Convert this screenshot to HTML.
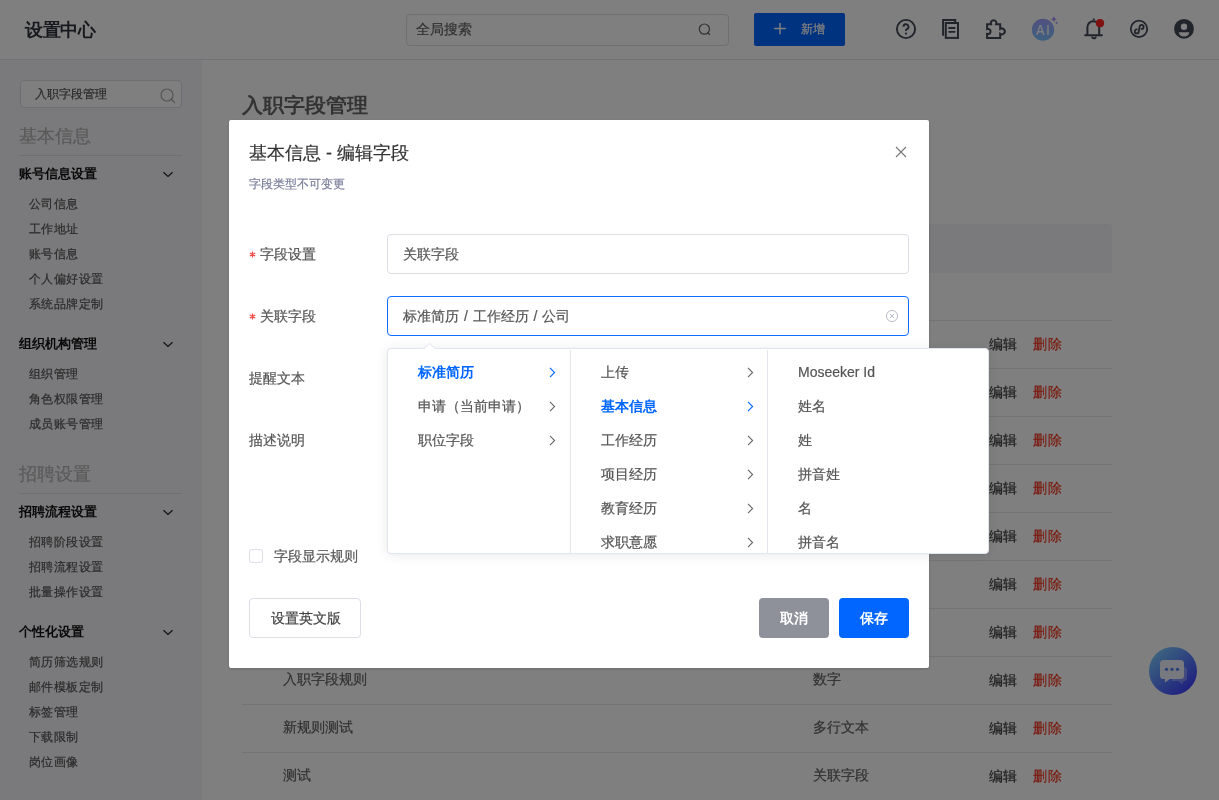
<!DOCTYPE html>
<html><head><meta charset="utf-8"><style>
*{margin:0;padding:0;box-sizing:border-box}
html,body{width:1219px;height:800px;overflow:hidden;background:#fff;font-family:"Liberation Sans",sans-serif;color:#333}
.a{position:absolute}
.t{position:absolute;white-space:nowrap;line-height:1;-webkit-text-stroke-width:.2px}
.t.b{-webkit-text-stroke-width:0}
#root{position:absolute;left:0;top:0;width:1219px;height:800px;overflow:hidden;will-change:transform}
svg{position:absolute;overflow:visible}
</style></head><body><div id="root">
<div class="a" style="left:0px;top:0px;width:1219px;height:59px;background:#fff"></div>
<div class="a" style="left:0px;top:59px;width:1219px;height:1px;background:#e2e4ea"></div>
<div class="t b" style="left:25px;top:21.3px;font-size:18px;color:#30333c;font-weight:bold;transform:scale(0.975);transform-origin:0 0">设置中心</div>
<div class="a" style="left:406px;top:14px;width:323px;height:32px;border:1px solid #dcdde6;border-radius:4px"></div>
<div class="t" style="left:416px;top:22px;font-size:14px;color:#666;font-weight:normal;">全局搜索</div>
<svg style="left:696px;top:21px" width="16" height="16" viewBox="0 0 16 16"><circle cx="8.4" cy="8.1" r="5.1" fill="none" stroke="#666" stroke-width="1.2"/><line x1="12" y1="11.8" x2="13.7" y2="13.6" stroke="#666" stroke-width="1.3" stroke-linecap="round"/></svg>
<div class="a" style="left:754px;top:13px;width:91px;height:33px;background:#0066ff;border-radius:2px"></div>
<svg style="left:772px;top:21px" width="16" height="16" viewBox="0 0 16 16"><path d="M8 2V13.2M2.2 7.6H13.8" stroke="#fff" stroke-width="1.5"/></svg>
<div class="t" style="left:801px;top:22.5px;font-size:12px;color:#fff;font-weight:normal;">新增</div>
<svg style="left:894px;top:17px" width="24" height="24" viewBox="0 0 24 24"><circle cx="12" cy="12" r="9.1" fill="none" stroke="#434856" stroke-width="1.9"/><path d="M9.5 9.8a2.5 2.5 0 1 1 3.4 2.3c-.6.3-.9.7-.9 1.3v.5" fill="none" stroke="#434856" stroke-width="1.9"/><circle cx="12" cy="16.6" r="1.1" fill="#434856"/></svg>
<svg style="left:940px;top:17px" width="22" height="24" viewBox="0 0 22 24"><path d="M3.1 18.8V3H15.2V6" fill="none" stroke="#434856" stroke-width="2"/><rect x="5.8" y="6" width="12.2" height="14.9" fill="none" stroke="#434856" stroke-width="2"/><path d="M9.1 11H14.7M9.1 14.8H14.7" stroke="#434856" stroke-width="1.8" stroke-linecap="round"/></svg>
<svg style="left:984px;top:17px" width="24" height="24" viewBox="0 0 24 24"><path d="M3.1 20.9V16.9A2.6 2.6 0 1 0 3.1 12V7.2H7A2.85 2.85 0 1 1 12.2 7.2H16.2V12A2.95 2.95 0 1 1 16.2 16.9V20.9Z" fill="none" stroke="#434856" stroke-width="2" stroke-linejoin="miter"/></svg>
<svg style="left:1030px;top:16px" width="30" height="28" viewBox="0 0 30 28"><defs><linearGradient id="aig" x1="0" y1="0" x2="0" y2="1"><stop offset="0" stop-color="#a2a2ff"/><stop offset="1" stop-color="#7cc0ff"/></linearGradient></defs><circle cx="13" cy="13.75" r="11.1" fill="url(#aig)"/><text transform="translate(6.2 19.2) scale(0.92 1.12)" x="0" y="0" font-family="Liberation Sans" font-size="13.4" letter-spacing="2" fill="#fff" stroke="#fff" stroke-width=".2">AI</text><path d="M23.9 0.2l.9 2.1 2.1.9-2.1.9-.9 2.1-.9-2.1-2.1-.9 2.1-.9z" fill="#a58dff"/><path d="M26.6 5.4l.5 1.1 1.1.5-1.1.5-.5 1.1-.5-1.1-1.1-.5 1.1-.5z" fill="#8fa0ff"/></svg>
<svg style="left:1082px;top:16px" width="26" height="26" viewBox="0 0 26 26"><path d="M5.4 19.6V11.2a5.9 5.9 0 0 1 11.8 0v8.4" fill="none" stroke="#434856" stroke-width="2"/><path d="M3.2 19.3h16.7" stroke="#434856" stroke-width="2.1" stroke-linecap="round"/><path d="M10 20.4a1.9 1.9 0 0 0 3.8 0" fill="none" stroke="#434856" stroke-width="1.8"/><path d="M11.8 2.5v2" stroke="#434856" stroke-width="1.8"/><circle cx="18" cy="7.2" r="4.1" fill="#ff2222"/></svg>
<svg style="left:1127px;top:17px" width="24" height="24" viewBox="0 0 24 24"><circle cx="12" cy="11.9" r="8.2" fill="none" stroke="#434856" stroke-width="1.8"/><path d="M9.8 12.4A2 2 0 1 0 11.8 14.4L12.6 9.9A2 2 0 1 1 14.6 11.9" fill="none" stroke="#434856" stroke-width="1.8" stroke-linecap="round"/></svg>
<svg style="left:1172px;top:17px" width="24" height="24" viewBox="0 0 24 24"><circle cx="12" cy="11.8" r="9.9" fill="#434856"/><circle cx="12" cy="9.8" r="3.2" fill="#fff"/><path d="M6.8 15.2H17.3A5.25 4.3 0 0 1 6.8 15.2Z" fill="#fff"/></svg>
<div class="a" style="left:0px;top:60px;width:202px;height:740px;background:#f4f4f8"></div>
<div class="a" style="left:20px;top:80px;width:162px;height:28px;border:1px solid #d9dce3;border-radius:4px;background:#fff"></div>
<div class="t" style="left:35px;top:88px;font-size:12px;color:#555;font-weight:normal;">入职字段管理</div>
<svg style="left:160px;top:88px" width="17" height="17" viewBox="0 0 17 17"><circle cx="7" cy="7" r="6" fill="none" stroke="#aaa" stroke-width="1.2"/><line x1="11.3" y1="11.3" x2="14.5" y2="14.5" stroke="#aaa" stroke-width="1.3" stroke-linecap="round"/></svg>
<div class="t" style="left:19px;top:127px;font-size:18px;color:#b3b3b3;font-weight:normal;">基本信息</div>
<div class="a" style="left:19px;top:155px;width:163px;height:1px;background:#e0e0e6"></div>
<div class="t b" style="left:19px;top:166.5px;font-size:13px;color:#111;font-weight:bold;">账号信息设置</div>
<svg style="left:162px;top:170px" width="12" height="8" viewBox="0 0 12 8"><path d="M1.4 2.3L6 6.5L10.6 2.3" fill="none" stroke="#222" stroke-width="1.2"/></svg>
<div class="t" style="left:29px;top:198.3px;font-size:12px;color:#555;font-weight:normal;transform:scale(1.035);transform-origin:0 0">公司信息</div>
<div class="t" style="left:29px;top:223.3px;font-size:12px;color:#555;font-weight:normal;transform:scale(1.035);transform-origin:0 0">工作地址</div>
<div class="t" style="left:29px;top:248.3px;font-size:12px;color:#555;font-weight:normal;transform:scale(1.035);transform-origin:0 0">账号信息</div>
<div class="t" style="left:29px;top:273.3px;font-size:12px;color:#555;font-weight:normal;transform:scale(1.035);transform-origin:0 0">个人偏好设置</div>
<div class="t" style="left:29px;top:298.3px;font-size:12px;color:#555;font-weight:normal;transform:scale(1.035);transform-origin:0 0">系统品牌定制</div>
<div class="t b" style="left:19px;top:336.5px;font-size:13px;color:#111;font-weight:bold;">组织机构管理</div>
<svg style="left:162px;top:340px" width="12" height="8" viewBox="0 0 12 8"><path d="M1.4 2.3L6 6.5L10.6 2.3" fill="none" stroke="#222" stroke-width="1.2"/></svg>
<div class="t" style="left:29px;top:368.3px;font-size:12px;color:#555;font-weight:normal;transform:scale(1.035);transform-origin:0 0">组织管理</div>
<div class="t" style="left:29px;top:393.3px;font-size:12px;color:#555;font-weight:normal;transform:scale(1.035);transform-origin:0 0">角色权限管理</div>
<div class="t" style="left:29px;top:418.3px;font-size:12px;color:#555;font-weight:normal;transform:scale(1.035);transform-origin:0 0">成员账号管理</div>
<div class="t" style="left:19px;top:465px;font-size:18px;color:#b3b3b3;font-weight:normal;">招聘设置</div>
<div class="a" style="left:19px;top:493px;width:163px;height:1px;background:#e0e0e6"></div>
<div class="t b" style="left:19px;top:504.5px;font-size:13px;color:#111;font-weight:bold;">招聘流程设置</div>
<svg style="left:162px;top:508px" width="12" height="8" viewBox="0 0 12 8"><path d="M1.4 2.3L6 6.5L10.6 2.3" fill="none" stroke="#222" stroke-width="1.2"/></svg>
<div class="t" style="left:29px;top:536.3px;font-size:12px;color:#555;font-weight:normal;transform:scale(1.035);transform-origin:0 0">招聘阶段设置</div>
<div class="t" style="left:29px;top:561.3px;font-size:12px;color:#555;font-weight:normal;transform:scale(1.035);transform-origin:0 0">招聘流程设置</div>
<div class="t" style="left:29px;top:586.3px;font-size:12px;color:#555;font-weight:normal;transform:scale(1.035);transform-origin:0 0">批量操作设置</div>
<div class="t b" style="left:19px;top:624.5px;font-size:13px;color:#111;font-weight:bold;">个性化设置</div>
<svg style="left:162px;top:628px" width="12" height="8" viewBox="0 0 12 8"><path d="M1.4 2.3L6 6.5L10.6 2.3" fill="none" stroke="#222" stroke-width="1.2"/></svg>
<div class="t" style="left:29px;top:656.3px;font-size:12px;color:#555;font-weight:normal;transform:scale(1.035);transform-origin:0 0">简历筛选规则</div>
<div class="t" style="left:29px;top:681.3px;font-size:12px;color:#555;font-weight:normal;transform:scale(1.035);transform-origin:0 0">邮件模板定制</div>
<div class="t" style="left:29px;top:706.3px;font-size:12px;color:#555;font-weight:normal;transform:scale(1.035);transform-origin:0 0">标签管理</div>
<div class="t" style="left:29px;top:731.3px;font-size:12px;color:#555;font-weight:normal;transform:scale(1.035);transform-origin:0 0">下载限制</div>
<div class="t" style="left:29px;top:756.3px;font-size:12px;color:#555;font-weight:normal;transform:scale(1.035);transform-origin:0 0">岗位画像</div>
<div class="t b" style="left:242px;top:95px;font-size:20px;color:#666;font-weight:bold;transform:scale(1.05,1.0);transform-origin:0 0">入职字段管理</div>
<div class="a" style="left:242px;top:224px;width:870px;height:49px;background:#f4f4fa;border-radius:4px 4px 0 0"></div>
<div class="a" style="left:242px;top:320px;width:870px;height:1px;background:#e8e8f0"></div>
<div class="a" style="left:242px;top:368px;width:870px;height:1px;background:#e8e8f0"></div>
<div class="a" style="left:242px;top:416px;width:870px;height:1px;background:#e8e8f0"></div>
<div class="a" style="left:242px;top:464px;width:870px;height:1px;background:#e8e8f0"></div>
<div class="a" style="left:242px;top:512px;width:870px;height:1px;background:#e8e8f0"></div>
<div class="a" style="left:242px;top:560px;width:870px;height:1px;background:#e8e8f0"></div>
<div class="a" style="left:242px;top:608px;width:870px;height:1px;background:#e8e8f0"></div>
<div class="a" style="left:242px;top:656px;width:870px;height:1px;background:#e8e8f0"></div>
<div class="a" style="left:242px;top:704px;width:870px;height:1px;background:#e8e8f0"></div>
<div class="a" style="left:242px;top:752px;width:870px;height:1px;background:#e8e8f0"></div>
<div class="t" style="left:989px;top:337px;font-size:14px;color:#3a3a3a;font-weight:normal;">编辑</div>
<div class="t" style="left:1033px;top:337px;font-size:14px;color:#f2301c;font-weight:normal;letter-spacing:.5px">删除</div>
<div class="t" style="left:989px;top:385px;font-size:14px;color:#3a3a3a;font-weight:normal;">编辑</div>
<div class="t" style="left:1033px;top:385px;font-size:14px;color:#f2301c;font-weight:normal;letter-spacing:.5px">删除</div>
<div class="t" style="left:989px;top:433px;font-size:14px;color:#3a3a3a;font-weight:normal;">编辑</div>
<div class="t" style="left:1033px;top:433px;font-size:14px;color:#f2301c;font-weight:normal;letter-spacing:.5px">删除</div>
<div class="t" style="left:989px;top:481px;font-size:14px;color:#3a3a3a;font-weight:normal;">编辑</div>
<div class="t" style="left:1033px;top:481px;font-size:14px;color:#f2301c;font-weight:normal;letter-spacing:.5px">删除</div>
<div class="t" style="left:989px;top:529px;font-size:14px;color:#3a3a3a;font-weight:normal;">编辑</div>
<div class="t" style="left:1033px;top:529px;font-size:14px;color:#f2301c;font-weight:normal;letter-spacing:.5px">删除</div>
<div class="t" style="left:989px;top:577px;font-size:14px;color:#3a3a3a;font-weight:normal;">编辑</div>
<div class="t" style="left:1033px;top:577px;font-size:14px;color:#f2301c;font-weight:normal;letter-spacing:.5px">删除</div>
<div class="t" style="left:989px;top:625px;font-size:14px;color:#3a3a3a;font-weight:normal;">编辑</div>
<div class="t" style="left:1033px;top:625px;font-size:14px;color:#f2301c;font-weight:normal;letter-spacing:.5px">删除</div>
<div class="t" style="left:989px;top:673px;font-size:14px;color:#3a3a3a;font-weight:normal;">编辑</div>
<div class="t" style="left:1033px;top:673px;font-size:14px;color:#f2301c;font-weight:normal;letter-spacing:.5px">删除</div>
<div class="t" style="left:989px;top:721px;font-size:14px;color:#3a3a3a;font-weight:normal;">编辑</div>
<div class="t" style="left:1033px;top:721px;font-size:14px;color:#f2301c;font-weight:normal;letter-spacing:.5px">删除</div>
<div class="t" style="left:989px;top:769px;font-size:14px;color:#3a3a3a;font-weight:normal;">编辑</div>
<div class="t" style="left:1033px;top:769px;font-size:14px;color:#f2301c;font-weight:normal;letter-spacing:.5px">删除</div>
<div class="t" style="left:283px;top:672px;font-size:14px;color:#606060;font-weight:normal;">入职字段规则</div>
<div class="t" style="left:813px;top:672px;font-size:14px;color:#606060;font-weight:normal;">数字</div>
<div class="t" style="left:283px;top:720px;font-size:14px;color:#606060;font-weight:normal;">新规则测试</div>
<div class="t" style="left:813px;top:720px;font-size:14px;color:#606060;font-weight:normal;">多行文本</div>
<div class="t" style="left:283px;top:768px;font-size:14px;color:#606060;font-weight:normal;">测试</div>
<div class="t" style="left:813px;top:768px;font-size:14px;color:#606060;font-weight:normal;">关联字段</div>
<svg style="left:1149px;top:647px" width="48" height="48" viewBox="0 0 48 48"><defs><linearGradient id="cg" x1="0.1" y1="0.05" x2="0.9" y2="0.95"><stop offset="0" stop-color="#7cd0ff"/><stop offset="1" stop-color="#3a36ff"/></linearGradient></defs><circle cx="24" cy="24" r="24" fill="url(#cg)"/><path d="M23 20h12a3 3 0 0 1 3 3v8a3 3 0 0 1-3 3h-0.5l-1 3.5-4-3.5H23z" fill="#fff" opacity=".3"/><path d="M14.5 13h17a3.5 3.5 0 0 1 3.5 3.5v12a3.5 3.5 0 0 1-3.5 3.5H21l-5 3.5V32h-1.5A3.5 3.5 0 0 1 11 28.5v-12A3.5 3.5 0 0 1 14.5 13z" fill="#eef2ff"/><circle cx="17.5" cy="22.3" r="1.6" fill="#4f7fee"/><circle cx="23" cy="22.3" r="1.6" fill="#4f7fee"/><circle cx="28.5" cy="22.3" r="1.6" fill="#4f7fee"/></svg>
<div class="a" style="left:0px;top:0px;width:1219px;height:800px;background:rgba(0,0,0,.5)"></div>
<div class="a" style="left:229px;top:120px;width:700px;height:548px;background:#fff;border-radius:2px;box-shadow:0 1px 3px rgba(0,0,0,.18)"></div>
<div class="t" style="left:249px;top:143.5px;font-size:18px;color:#333;font-weight:normal;">基本信息 - 编辑字段</div>
<svg style="left:895px;top:146px" width="12" height="12" viewBox="0 0 12 12"><path d="M1 1L11 11M11 1L1 11" stroke="#777" stroke-width="1.1"/></svg>
<div class="t" style="left:249px;top:177.7px;font-size:12px;color:#7b7e9b;font-weight:normal;">字段类型不可变更</div>
<svg style="left:249px;top:251px" width="7" height="7" viewBox="0 0 7 7"><path d="M3.5 0.4V6.6M0.8 2L6.2 5M0.8 5L6.2 2" stroke="#f24848" stroke-width="1.25"/></svg>
<div class="t" style="left:260px;top:247px;font-size:14px;color:#555;font-weight:normal;">字段设置</div>
<div class="a" style="left:387px;top:234px;width:522px;height:40px;border:1px solid #dcdfe8;border-radius:4px"></div>
<div class="t" style="left:403px;top:247px;font-size:14px;color:#555;font-weight:normal;">关联字段</div>
<svg style="left:249px;top:313px" width="7" height="7" viewBox="0 0 7 7"><path d="M3.5 0.4V6.6M0.8 2L6.2 5M0.8 5L6.2 2" stroke="#f24848" stroke-width="1.25"/></svg>
<div class="t" style="left:260px;top:309px;font-size:14px;color:#555;font-weight:normal;">关联字段</div>
<div class="a" style="left:387px;top:296px;width:522px;height:40px;border:1px solid #106cff;border-radius:4px"></div>
<div class="t" style="left:403px;top:309px;font-size:14px;color:#555;font-weight:normal;word-spacing:1px">标准简历 / 工作经历 / 公司</div>
<svg style="left:884.5px;top:308.7px" width="14" height="14" viewBox="0 0 14 14"><circle cx="7" cy="7" r="5.6" fill="none" stroke="#b8bcc8" stroke-width="1"/><path d="M5 5L9 9M9 5L5 9" stroke="#b8bcc8" stroke-width="1"/></svg>
<div class="t" style="left:249px;top:371px;font-size:14px;color:#555;font-weight:normal;">提醒文本</div>
<div class="t" style="left:249px;top:433px;font-size:14px;color:#555;font-weight:normal;">描述说明</div>
<div class="a" style="left:249px;top:549px;width:14px;height:14px;border:1px solid #dcdfe6;border-radius:2px"></div>
<div class="t" style="left:274px;top:549px;font-size:14px;color:#555;font-weight:normal;">字段显示规则</div>
<div class="a" style="left:249px;top:598px;width:112px;height:40px;border:1px solid #dcdfe6;border-radius:4px"></div>
<div class="t" style="left:271px;top:611px;font-size:14px;color:#444;font-weight:normal;">设置英文版</div>
<div class="a" style="left:759px;top:598px;width:70px;height:40px;background:#8e9199;border-radius:4px"></div>
<div class="t b" style="left:780px;top:611px;font-size:14px;color:#fff;font-weight:bold;">取消</div>
<div class="a" style="left:839px;top:598px;width:70px;height:40px;background:#0066ff;border-radius:4px"></div>
<div class="t b" style="left:860px;top:611px;font-size:14px;color:#fff;font-weight:bold;">保存</div>
<div class="a" style="left:387px;top:348px;width:602px;height:206px;background:#fff;border:1px solid #e1e5ef;border-radius:4px;box-shadow:0 1px 12px rgba(0,0,0,.09)"></div>
<svg style="left:422.5px;top:343px" width="14" height="7" viewBox="0 0 14 7"><path d="M0 6.5L6.5 0.5L13 6.5" fill="#fff" stroke="#e1e5ef" stroke-width="1"/><rect x="0" y="6" width="14" height="2" fill="#fff"/></svg>
<div class="a" style="left:570px;top:350px;width:1px;height:203px;background:#e3e6ee"></div>
<div class="a" style="left:767px;top:350px;width:1px;height:203px;background:#e3e6ee"></div>
<div class="t b" style="left:418px;top:365px;font-size:14px;color:#0066ff;font-weight:bold;">标准简历</div>
<svg style="left:549px;top:366.5px" width="7" height="11" viewBox="0 0 7 11"><path d="M1 0.8L5.6 5.5L1 10.2" fill="none" stroke="#0066ff" stroke-width="1.1"/></svg>
<div class="t" style="left:418px;top:399px;font-size:14px;color:#555;font-weight:normal;">申请（当前申请）</div>
<svg style="left:549px;top:400.5px" width="7" height="11" viewBox="0 0 7 11"><path d="M1 0.8L5.6 5.5L1 10.2" fill="none" stroke="#666" stroke-width="1.1"/></svg>
<div class="t" style="left:418px;top:433px;font-size:14px;color:#555;font-weight:normal;">职位字段</div>
<svg style="left:549px;top:434.5px" width="7" height="11" viewBox="0 0 7 11"><path d="M1 0.8L5.6 5.5L1 10.2" fill="none" stroke="#666" stroke-width="1.1"/></svg>
<div class="a" style="left:571px;top:350px;width:196px;height:203px;overflow:hidden">
<div class="t" style="left:30px;top:15px;font-size:14px;color:#555;font-weight:normal">上传</div>
<svg style="left:176px;top:16.5px" width="7" height="11" viewBox="0 0 7 11"><path d="M1 0.8L5.6 5.5L1 10.2" fill="none" stroke="#666" stroke-width="1.1"/></svg>
<div class="t b" style="left:30px;top:49px;font-size:14px;color:#0066ff;font-weight:bold">基本信息</div>
<svg style="left:176px;top:50.5px" width="7" height="11" viewBox="0 0 7 11"><path d="M1 0.8L5.6 5.5L1 10.2" fill="none" stroke="#0066ff" stroke-width="1.1"/></svg>
<div class="t" style="left:30px;top:83px;font-size:14px;color:#555;font-weight:normal">工作经历</div>
<svg style="left:176px;top:84.5px" width="7" height="11" viewBox="0 0 7 11"><path d="M1 0.8L5.6 5.5L1 10.2" fill="none" stroke="#666" stroke-width="1.1"/></svg>
<div class="t" style="left:30px;top:117px;font-size:14px;color:#555;font-weight:normal">项目经历</div>
<svg style="left:176px;top:118.5px" width="7" height="11" viewBox="0 0 7 11"><path d="M1 0.8L5.6 5.5L1 10.2" fill="none" stroke="#666" stroke-width="1.1"/></svg>
<div class="t" style="left:30px;top:151px;font-size:14px;color:#555;font-weight:normal">教育经历</div>
<svg style="left:176px;top:152.5px" width="7" height="11" viewBox="0 0 7 11"><path d="M1 0.8L5.6 5.5L1 10.2" fill="none" stroke="#666" stroke-width="1.1"/></svg>
<div class="t" style="left:30px;top:185px;font-size:14px;color:#555;font-weight:normal">求职意愿</div>
<svg style="left:176px;top:186.5px" width="7" height="11" viewBox="0 0 7 11"><path d="M1 0.8L5.6 5.5L1 10.2" fill="none" stroke="#666" stroke-width="1.1"/></svg>
</div>
<div class="a" style="left:768px;top:350px;width:220px;height:203px;overflow:hidden">
<div class="t" style="left:30px;top:15px;font-size:14px;color:#555">Moseeker Id</div>
<div class="t" style="left:30px;top:49px;font-size:14px;color:#555">姓名</div>
<div class="t" style="left:30px;top:83px;font-size:14px;color:#555">姓</div>
<div class="t" style="left:30px;top:117px;font-size:14px;color:#555">拼音姓</div>
<div class="t" style="left:30px;top:151px;font-size:14px;color:#555">名</div>
<div class="t" style="left:30px;top:185px;font-size:14px;color:#555">拼音名</div>
</div>
</div></body></html>
